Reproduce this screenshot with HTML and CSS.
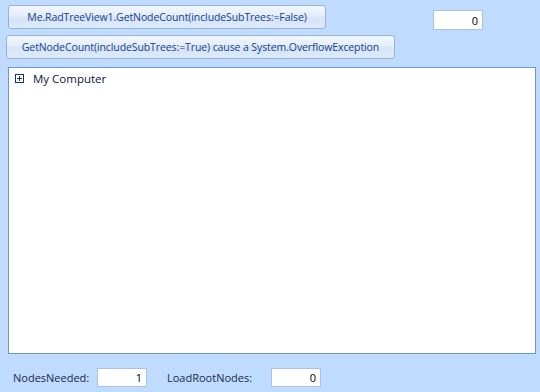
FILE: index.html
```html
<!DOCTYPE html>
<html lang="en">
<head>
    <meta charset="UTF-8">
    <title>RadTreeView GetNodeCount</title>
    <link rel="stylesheet" href="styles.css">
</head>
<body>
    <div class="form">
        <div class="top-row">
            <div class="buttons">
                <button class="rad-btn btn-false">Me.RadTreeView1.GetNodeCount(includeSubTrees:=False)</button>
                <button class="rad-btn btn-true">GetNodeCount(includeSubTrees:=True) cause a System.OverflowException</button>
            </div>
            <input class="rad-text count-box" type="text" value="0">
        </div>

        <div class="tree">
            <div class="tree-node">
                <span class="expander">
                    <svg width="9" height="9" viewBox="0 0 9 9">
                        <rect x="0.5" y="0.5" width="8" height="8" fill="#fff" stroke="#1c2f73"/>
                        <path d="M2 4.5h5M4.5 2v5" stroke="#1c2f73" stroke-width="1"/>
                    </svg>
                </span>
                <span class="node-text">My Computer</span>
            </div>
        </div>

        <div class="bottom-row">
            <label class="lbl nodes-lbl">NodesNeeded:</label>
            <input class="rad-text small-box" type="text" value="1">
            <label class="lbl root-lbl">LoadRootNodes:</label>
            <input class="rad-text small-box" type="text" value="0">
        </div>
    </div>
</body>
</html>
```

FILE: styles.css
```css
* {
    margin: 0;
    padding: 0;
    box-sizing: border-box;
    font-family: 'Open Sans', 'Noto Sans', sans-serif;
}

body {
    background: #bfdbff;
    width: 540px;
    height: 392px;
    overflow: hidden;
}

.form {
    display: flex;
    flex-direction: column;
}

.top-row {
    display: flex;
    align-items: flex-start;
}

.buttons {
    display: flex;
    flex-direction: column;
    align-items: flex-start;
}

.rad-btn {
    height: 24px;
    border: 1px solid #9ab3d3;
    border-radius: 3px;
    background: linear-gradient(#f2f7fe 0%, #e3edfb 45%, #d6e4f7 55%, #dce9fa 100%);
    color: #15428b;
    font-size: 10.5px;
    letter-spacing: -0.1px;
}

.btn-false {
    width: 318px;
    margin: 5px 0 0 8px;
}

.btn-true {
    width: 389px;
    margin: 6px 0 0 6px;
}

.rad-text {
    height: 20px;
    border: 1px solid #a9c2e3;
    background: #fff;
    text-align: right;
    padding-right: 4px;
    font-size: 11px;
    color: #000;
    outline: none;
}

.count-box {
    width: 50px;
    margin: 10px 0 0 38px;
}

.tree {
    width: 528px;
    height: 287px;
    margin: 8px 0 0 8px;
    background: #fff;
    border: 1px solid #6c98d3;
    padding: 2px 0 0 6px;
}

.tree-node {
    display: flex;
    align-items: center;
    height: 16px;
}

.expander {
    display: flex;
    width: 9px;
    height: 9px;
}

.node-text {
    margin-left: 9px;
    font-size: 11.5px;
    color: #0c1733;
}

.bottom-row {
    display: flex;
    align-items: center;
    margin-top: 14px;
}

.lbl {
    font-size: 11px;
    color: #1b2a44;
}

.nodes-lbl {
    margin-left: 13px;
    width: 84px;
}

.root-lbl {
    margin-left: 20px;
    width: 104px;
}

.small-box {
    width: 50px;
    height: 19px;
}
```
